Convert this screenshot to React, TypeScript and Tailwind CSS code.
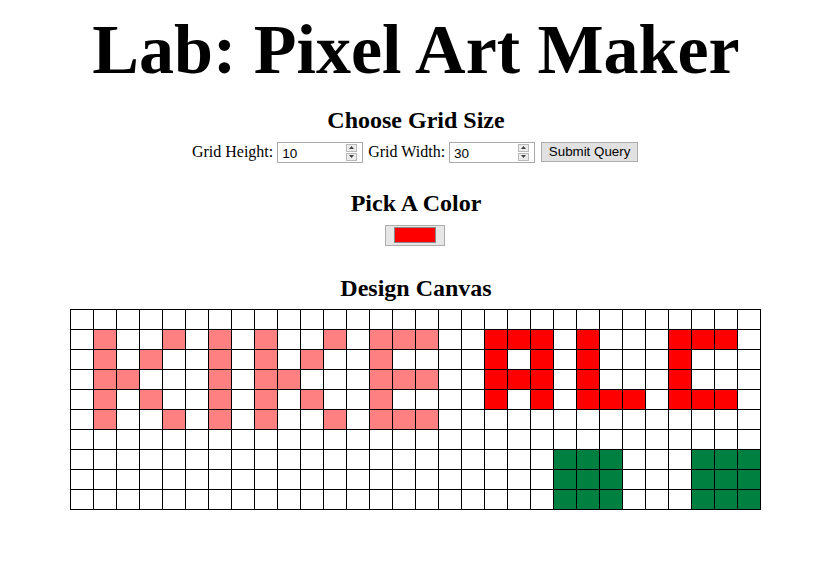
import React from "react";

const PINK = "#ff8080";
const RED = "#ff0000";
const GREEN = "#008040";

function buildGrid(): (string | null)[][] {
  const rows = 10;
  const cols = 30;
  const g: (string | null)[][] = Array.from({ length: rows }, () =>
    Array.from({ length: cols }, () => null as string | null)
  );
  const set = (r: number, c: number, color: string) => {
    g[r][c] = color;
  };
  // K (cols 1-4)
  for (let r = 1; r <= 5; r++) set(r, 1, PINK);
  set(1, 4, PINK);
  set(2, 3, PINK);
  set(3, 2, PINK);
  set(4, 3, PINK);
  set(5, 4, PINK);
  // I (col 6)
  for (let r = 1; r <= 5; r++) set(r, 6, PINK);
  // K (cols 8-11)
  for (let r = 1; r <= 5; r++) set(r, 8, PINK);
  set(1, 11, PINK);
  set(2, 10, PINK);
  set(3, 9, PINK);
  set(4, 10, PINK);
  set(5, 11, PINK);
  // E (cols 13-15)
  for (let r = 1; r <= 5; r++) set(r, 13, PINK);
  [1, 3, 5].forEach((r) => {
    set(r, 14, PINK);
    set(r, 15, PINK);
  });
  // A (cols 18-20)
  for (let r = 1; r <= 4; r++) {
    set(r, 18, RED);
    set(r, 20, RED);
  }
  set(1, 19, RED);
  set(3, 19, RED);
  // L (cols 22-24)
  for (let r = 1; r <= 4; r++) set(r, 22, RED);
  set(4, 23, RED);
  set(4, 24, RED);
  // C (cols 26-28)
  for (let r = 1; r <= 4; r++) set(r, 26, RED);
  [1, 4].forEach((r) => {
    set(r, 27, RED);
    set(r, 28, RED);
  });
  // Green blocks
  for (let r = 7; r <= 9; r++) {
    for (let c = 21; c <= 23; c++) set(r, c, GREEN);
    for (let c = 27; c <= 29; c++) set(r, c, GREEN);
  }
  return g;
}

function Spinner() {
  return (
    <div className="absolute right-[5px] top-[1px] flex h-[17px] w-[11px] flex-col gap-[1px]">
      <div className="flex flex-1 items-center justify-center border border-[#b9b9b9] bg-[#ececec]">
        <svg width="5" height="3" viewBox="0 0 5 3">
          <polygon points="2.5,0 5,3 0,3" fill="#404040" />
        </svg>
      </div>
      <div className="flex flex-1 items-center justify-center border border-[#b9b9b9] bg-[#ececec]">
        <svg width="5" height="3" viewBox="0 0 5 3">
          <polygon points="0,0 5,0 2.5,3" fill="#404040" />
        </svg>
      </div>
    </div>
  );
}

function NumberBox({ value }: { value: string }) {
  return (
    <div className="relative h-[21px] w-[86px] border border-[#a9a9a9] bg-white text-left">
      <span
        className="absolute left-[4px] top-[3px] text-[13.5px] leading-[15px] text-black"
        style={{ fontFamily: '"Liberation Sans", Arial, sans-serif' }}
      >
        {value}
      </span>
      <Spinner />
    </div>
  );
}

export default function App() {
  const grid = buildGrid();
  return (
    <div
      className="min-h-[561px] w-full bg-white text-center text-black"
      style={{ fontFamily: '"Liberation Serif", "Times New Roman", serif' }}
    >
      <h1 className="mt-[10px] text-[70px] font-bold leading-[80px]">
        Lab: Pixel Art Maker
      </h1>
      <h2 className="mt-[16px] text-[24px] font-bold leading-[28px]">
        Choose Grid Size
      </h2>
      <div className="mt-[7px] flex h-[22px] items-center justify-center pr-[2px] text-[16px] leading-[18px]">
        <span>Grid Height:</span>
        <div className="ml-[4px]">
          <NumberBox value="10" />
        </div>
        <span className="ml-[5px]">Grid Width:</span>
        <div className="ml-[4px]">
          <NumberBox value="30" />
        </div>
        <button
          className="ml-[6px] h-[20px] w-[97px] border border-[#adadad] bg-[#e1e1e1] text-[13.33px] leading-[16px] text-black"
          style={{ fontFamily: '"Liberation Sans", Arial, sans-serif' }}
        >
          Submit Query
        </button>
      </div>
      <h2 className="mt-[26px] text-[24px] font-bold leading-[28px]">
        Pick A Color
      </h2>
      <div className="mt-[8px] flex justify-center pr-[3px]">
        <div className="flex h-[21px] w-[60px] items-start justify-center border border-[#adadad] bg-[#e6e6e6] pt-[1px]">
          <div className="h-[16px] w-[42px] border border-[#8a8a8a] bg-[#ff0000]" />
        </div>
      </div>
      <h2 className="mt-[28px] text-[24px] font-bold leading-[28px]">
        Design Canvas
      </h2>
      <div className="mt-[7px] flex justify-center pr-[1px]">
        <div className="grid grid-cols-[repeat(30,23px)] border-l border-t border-black">
          {grid.flatMap((row, r) =>
            row.map((color, c) => (
              <div
                key={`${r}-${c}`}
                className="h-[20px] w-[23px] border-b border-r border-black"
                style={{ backgroundColor: color ?? "#ffffff" }}
              />
            ))
          )}
        </div>
      </div>
    </div>
  );
}
